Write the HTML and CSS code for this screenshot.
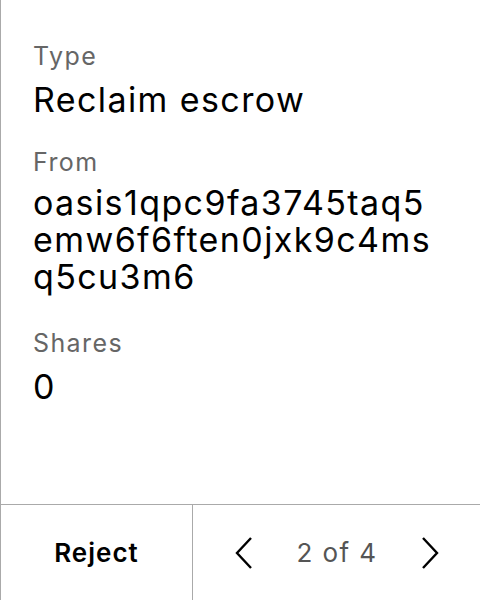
FILE: index.html
```html
<!DOCTYPE html>
<html>
<head>
<meta charset="utf-8">
<link rel="stylesheet" href="styles.css">
</head>
<body>
<div class="panel">
  <div class="details">
    <div class="field">
      <div class="label">Type</div>
      <div class="value">Reclaim escrow</div>
    </div>
    <div class="field">
      <div class="label">From</div>
      <div class="value address">oasis1qpc9fa3745taq5emw6f6ften0jxk9c4msq5cu3m6</div>
    </div>
    <div class="field field-shares">
      <div class="label">Shares</div>
      <div class="value">0</div>
    </div>
  </div>
  <div class="footer">
    <div class="reject">Reject</div>
    <div class="pager">
      <svg class="chev" width="18" height="32" viewBox="0 0 18 32"><path d="M16 1 L2 16 L16 31" fill="none" stroke="#000" stroke-width="2.4"/></svg>
      <span class="count">2 of 4</span>
      <svg class="chev" width="18" height="32" viewBox="0 0 18 32"><path d="M2 1 L16 16 L2 31" fill="none" stroke="#000" stroke-width="2.4"/></svg>
    </div>
  </div>
</div>
</body>
</html>
```
FILE: styles.css
```css
html, body {
  margin: 0;
  padding: 0;
  background: #fff;
}
body {
  font-family: Inter, "Noto Sans", sans-serif;
  color: #000;
}
.panel {
  width: 480px;
  height: 600px;
  box-sizing: border-box;
  border-left: 1px solid #aaa;
  display: flex;
  flex-direction: column;
}
.details {
  flex: 1;
  padding: 41px 47px 0 32px;
  display: flex;
  flex-direction: column;
  gap: 29px;
}
.field-shares {
  margin-top: 4px;
}
.label {
  font-size: 25px;
  line-height: 30px;
  letter-spacing: 1.4px;
  color: #666;
}
.value {
  font-size: 34px;
  line-height: 37px;
  letter-spacing: 1.4px;
  margin-top: 10px;
}
.address {
  margin-top: 7px;
  word-break: break-all;
}
.footer {
  height: 96px;
  border-top: 1px solid #aaa;
  display: flex;
  box-sizing: border-box;
}
.reject {
  width: 191px;
  border-right: 1px solid #aaa;
  display: flex;
  align-items: center;
  justify-content: center;
  font-size: 26px;
  font-weight: 600;
  letter-spacing: 1px;
}
.pager {
  flex: 1;
  display: flex;
  align-items: center;
  justify-content: space-between;
  padding: 0 41px 0 42px;
}
.count {
  font-size: 26px;
  letter-spacing: 1.4px;
  color: #555;
}
.chev {
  display: block;
}
```
